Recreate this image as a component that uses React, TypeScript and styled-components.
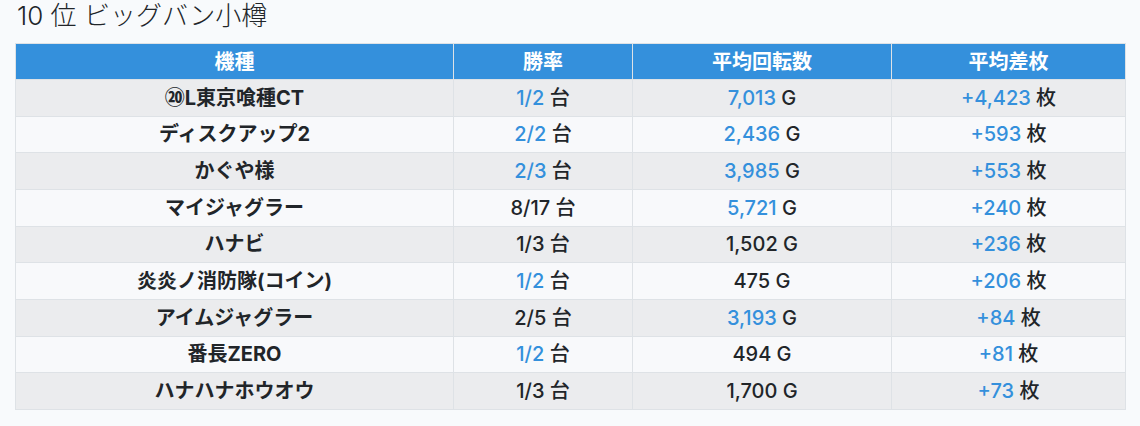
import React from 'react';
import styled, { createGlobalStyle } from 'styled-components';

const BLUE = '#3490dc';
const TEXT = '#212529';
const BORDER = '#dee2e6';
const FONT = `Inter, "Noto Sans CJK JP", sans-serif`;

type Row = {
  name: string;
  win: string;
  winHit: boolean;
  games: string;
  gamesHit: boolean;
  diff: string;
};

const rows: Row[] = [
  { name: '⑳L東京喰種CT', win: '1/2', winHit: true, games: '7,013', gamesHit: true, diff: '+4,423' },
  { name: 'ディスクアップ2', win: '2/2', winHit: true, games: '2,436', gamesHit: true, diff: '+593' },
  { name: 'かぐや様', win: '2/3', winHit: true, games: '3,985', gamesHit: true, diff: '+553' },
  { name: 'マイジャグラー', win: '8/17', winHit: false, games: '5,721', gamesHit: true, diff: '+240' },
  { name: 'ハナビ', win: '1/3', winHit: false, games: '1,502', gamesHit: false, diff: '+236' },
  { name: '炎炎ノ消防隊(コイン)', win: '1/2', winHit: true, games: '475', gamesHit: false, diff: '+206' },
  { name: 'アイムジャグラー', win: '2/5', winHit: false, games: '3,193', gamesHit: true, diff: '+84' },
  { name: '番長ZERO', win: '1/2', winHit: true, games: '494', gamesHit: false, diff: '+81' },
  { name: 'ハナハナホウオウ', win: '1/3', winHit: false, games: '1,700', gamesHit: false, diff: '+73' },
];

const GlobalStyle = createGlobalStyle`
  body {
    margin: 0;
    background: #f8fafc;
    font-family: ${FONT};
    color: ${TEXT};
  }
`;

const App = () => {
  return (
    <>
      <GlobalStyle />
      <Page>
        <Title>10 位 ビッグバン小樽</Title>
        <Table>
          <colgroup>
            <col style={{ width: 438 }} />
            <col style={{ width: 179 }} />
            <col style={{ width: 259 }} />
            <col style={{ width: 234 }} />
          </colgroup>
          <thead>
            <tr>
              <Th>機種</Th>
              <Th>勝率</Th>
              <Th>平均回転数</Th>
              <Th>平均差枚</Th>
            </tr>
          </thead>
          <tbody>
            {rows.map((r, i) => (
              <BodyRow key={r.name} $odd={i % 2 === 0}>
                <NameCell>{r.name}</NameCell>
                <Td>
                  <Num $hit={r.winHit}>{r.win}</Num> 台
                </Td>
                <Td>
                  <Num $hit={r.gamesHit}>{r.games}</Num> G
                </Td>
                <Td>
                  <Num $hit>{r.diff}</Num> 枚
                </Td>
              </BodyRow>
            ))}
          </tbody>
        </Table>
      </Page>
    </>
  );
};

export default App;

const Page = styled.div`
  padding: 0 15px;
`;

const Title = styled.h2`
  margin: 0;
  padding: 1px 0 0 2px;
  height: 43px;
  box-sizing: border-box;
  font-size: 26px;
  font-weight: 300;
  line-height: 30px;
  color: ${TEXT};
`;

const Table = styled.table`
  width: 1110px;
  border-collapse: collapse;
  table-layout: fixed;
  border: 1px solid ${BORDER};
  font-size: 20px;
  line-height: 1.2;
`;

const Th = styled.th`
  height: 35px;
  padding: 0;
  background: ${BLUE};
  color: #fff;
  font-weight: 700;
  text-align: center;
  border: 1px solid ${BORDER};
`;

const BodyRow = styled.tr<{ $odd: boolean }>`
  background: ${({ $odd }) => ($odd ? '#ebecee' : '#f8f9fb')};
`;

const Td = styled.td`
  height: 35.67px;
  padding: 0;
  text-align: center;
  border: 1px solid ${BORDER};
  font-weight: 500;
`;

const NameCell = styled(Td)`
  font-weight: 700;
`;

const Num = styled.span<{ $hit?: boolean }>`
  color: ${({ $hit }) => ($hit ? BLUE : TEXT)};
`;
